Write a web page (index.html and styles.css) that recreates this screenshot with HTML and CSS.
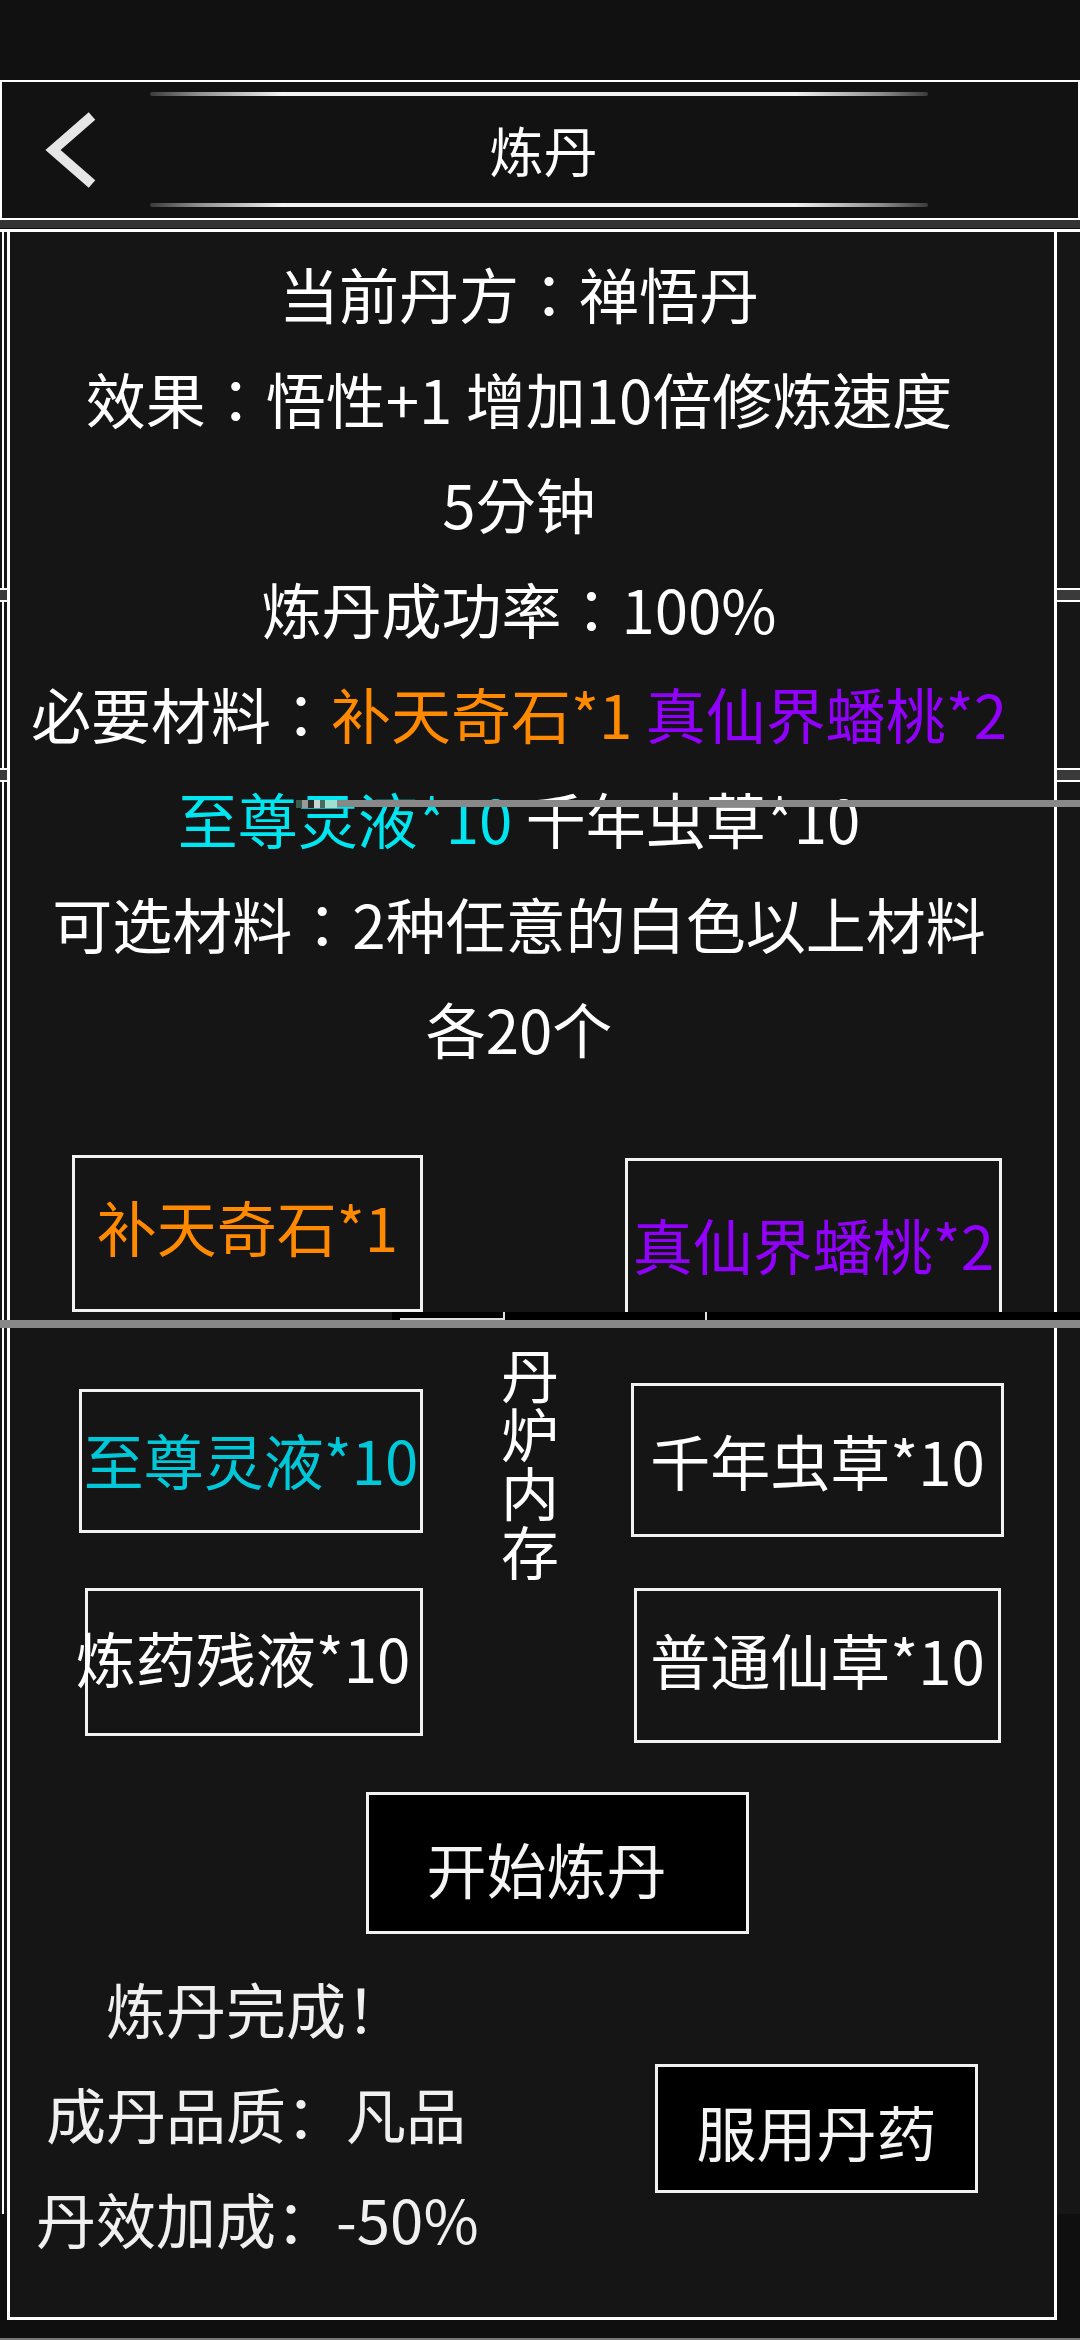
FILE: index.html
```html
<!DOCTYPE html>
<html lang="zh-CN">
<head>
<meta charset="utf-8">
<title>炼丹</title>
<link rel="stylesheet" href="styles.css">
</head>
<body>
<div class="screen">
  <div class="statusbar"></div>
  <header class="topbar">
    <div class="back">
      <svg width="148" height="115" viewBox="0 0 148 115">
        <polyline points="90,24 51,58 90,92" fill="none" stroke="#e6e6e6" stroke-width="10" stroke-linecap="butt" stroke-linejoin="miter"/>
      </svg>
    </div>
    <span class="deco deco-top"></span>
    <h1 class="title">炼丹</h1>
    <span class="deco deco-bottom"></span>
  </header>
  <main class="stage">
    <div class="backdrop">
      <span class="band band-1"></span>
      <span class="band band-2"></span>
    </div>
    <section class="panel">
      <div class="recipe" lang="zh-TW">
        <p>当前丹方：禅悟丹</p>
        <p>效果：悟性+1 增加10倍修炼速度</p>
        <p>5分钟</p>
        <p>炼丹成功率：100%</p>
        <p>必要材料：<span class="orange">补天奇石*1</span> <span class="purple">真仙界蟠桃*2</span></p>
        <p><span class="cyan">至尊灵液*10</span> 千年虫草*10</p>
        <p>可选材料：2种任意的白色以上材料</p>
        <p>各20个</p>
      </div>
      <div class="slots">
        <div class="slot slot-a orange">补天奇石*1</div>
        <div class="slot slot-b purple">真仙界蟠桃*2</div>
        <div class="furnace-label">丹炉内存</div>
        <div class="slot slot-c cyan-dim">至尊灵液*10</div>
        <div class="slot slot-d">千年虫草*10</div>
        <div class="slot slot-e">炼药残液*10</div>
        <div class="slot slot-f">普通仙草*10</div>
      </div>
      <button class="btn btn-start">开始炼丹</button>
      <div class="result">
        <div class="result-text">
          <p class="line r1">炼丹完成！</p>
          <p class="line r2">成丹品质：凡品</p>
          <p class="line r3">丹效加成：-50%</p>
        </div>
        <button class="btn btn-take">服用丹药</button>
      </div>
    </section>
    <div class="scanline scan-1"></div>
    <div class="glitch-bits"></div>
    <div class="tear"><span class="tick tick-1"></span><span class="tick tick-2"></span></div>
    <div class="scanline scan-2"></div>
  </main>
  <div class="bottom-edge"></div>
</div>
</body>
</html>
```
FILE: styles.css
```css
html, body {
  margin: 0;
  padding: 0;
  background: #111111;
}

.screen {
  width: 1080px;
  height: 2340px;
  overflow: hidden;
  background: #0f0f0f;
  color: #ffffff;
  font-family: "Noto Sans CJK SC", "Noto Sans", sans-serif;
}

.statusbar {
  height: 80px;
  background: #111111;
}

/* header */
.topbar {
  box-sizing: border-box;
  height: 140px;
  border: 2px solid #ffffff;
  background: #121212;
  display: grid;
  grid-template-columns: 148px 778px 1fr;
  grid-template-rows: 4px 1fr 4px;
  padding: 10px 0 11px;
}

.back {
  grid-column: 1;
  grid-row: 1 / 4;
}

.back svg {
  display: block;
}

.deco {
  grid-column: 2;
  height: 4px;
  border-radius: 2px;
  background: linear-gradient(90deg, #3a3a3a 0%, #8c8c8c 6%, #f2f2f2 17%, #f2f2f2 83%, #8c8c8c 94%, #3a3a3a 100%);
}

.deco-top { grid-row: 1; }
.deco-bottom { grid-row: 3; }

.title {
  grid-column: 2;
  grid-row: 2;
  align-self: center;
  margin: 0;
  padding-left: 9px;
  text-align: center;
  font-size: 54px;
  font-weight: 400;
  line-height: 1;
  color: #ffffff;
}

/* stage */
.stage {
  position: relative;
  box-sizing: border-box;
  height: 2118px;
  border-top: 8px solid #333333;
  padding-top: 1px;
  background: #0f0f0f;
}

.backdrop {
  position: absolute;
  top: 1px;
  left: 0;
  right: 0;
  height: 1982px;
  background: #161616;
  border-top: 3px solid #ffffff;
}

.backdrop::before {
  content: "";
  position: absolute;
  left: 2px;
  top: 0;
  bottom: 0;
  width: 2px;
  background: #ffffff;
}

.band {
  position: absolute;
  left: 0;
  right: 0;
  height: 10px;
  background: #3a3a3a;
  border-top: 2px solid #ffffff;
  border-bottom: 2px solid #ffffff;
}

.band-1 { top: 356px; }
.band-2 { top: 536px; }

.panel {
  position: relative;
  box-sizing: border-box;
  margin-left: 7px;
  width: 1050px;
  height: 2091px;
  border: 3px solid #ffffff;
  background: #151515;
}

/* recipe text */
.recipe {
  font-family: "Noto Sans CJK TC", "Noto Sans CJK SC", sans-serif;
  font-size: 60px;
  line-height: 105px;
  text-align: center;
  padding: 8px 26px 0 0;
}

.recipe p {
  margin: 0;
  white-space: nowrap;
}

.orange { color: #ff8a00; }
.purple { color: #9100fa; }
.cyan { color: #00e6f0; }
.cyan-dim { color: #00c8d8; }

/* material slots */
.slots {
  display: grid;
  grid-template-columns: 351px 202px 381px;
  grid-template-rows: 228px 205px 155px;
  margin: 75px 0 0 62px;
  font-size: 60px;
}

.slot {
  box-sizing: border-box;
  border: 3px solid #f2f2f2;
  display: flex;
  align-items: center;
  justify-content: center;
  white-space: nowrap;
  line-height: 1.2;
  align-self: start;
}

.slot-a {
  grid-column: 1;
  grid-row: 1;
  justify-self: end;
  width: 351px;
  height: 157px;
  padding-bottom: 16px;
}

.slot-b {
  grid-column: 3;
  grid-row: 1;
  justify-self: start;
  width: 377px;
  height: 167px;
  margin-top: 3px;
  padding-top: 5px;
}

.slot-c {
  grid-column: 1;
  grid-row: 2;
  justify-self: end;
  width: 344px;
  height: 144px;
  margin-top: 6px;
  padding-bottom: 4px;
}

.slot-d {
  grid-column: 3;
  grid-row: 2;
  justify-self: start;
  width: 373px;
  height: 154px;
  margin-left: 6px;
}

.slot-e {
  grid-column: 1;
  grid-row: 3;
  justify-self: end;
  width: 338px;
  height: 148px;
  padding: 0 22px 10px 0;
}

.slot-f {
  grid-column: 3;
  grid-row: 3;
  justify-self: start;
  width: 367px;
  height: 155px;
  margin-left: 9px;
  padding-bottom: 13px;
}

.furnace-label {
  grid-column: 2;
  grid-row: 2;
  align-self: start;
  justify-self: start;
  margin: -36px 0 0 78px;
  writing-mode: vertical-rl;
  text-orientation: upright;
  font-size: 58px;
  line-height: 58px;
  letter-spacing: 1px;
}

/* buttons */
.btn {
  box-sizing: border-box;
  display: flex;
  align-items: center;
  justify-content: center;
  background: #000000;
  color: #f4f4f4;
  border: 3px solid #f2f2f2;
  font-family: "Noto Sans CJK SC", sans-serif;
  font-size: 60px;
  line-height: 1.2;
  padding: 0;
  white-space: nowrap;
}

.btn-start {
  width: 383px;
  height: 142px;
  margin: 49px 0 0 356px;
  padding: 10px 22px 0 0;
}

/* result */
.result {
  display: flex;
  margin-top: 21px;
}

.result-text {
  width: 645px;
  font-size: 60px;
  line-height: 105px;
  color: #f0f0f0;
}

.line {
  margin-top: 0;
  margin-bottom: 0;
  white-space: nowrap;
}

.r1 { margin-left: 96px; }
.r2 { margin-left: 36px; }
.r3 { margin-left: 26px; }

.btn-take {
  width: 323px;
  height: 129px;
  margin-top: 109px;
  padding-top: 4px;
}

/* rendering glitches lying over the panel */
.scanline {
  position: absolute;
  background: #888888;
}

.scan-1 {
  top: 572px;
  left: 337px;
  right: 0;
  height: 7px;
}

.glitch-bits {
  position: absolute;
  top: 572px;
  left: 296px;
  width: 41px;
  height: 8px;
  background: linear-gradient(90deg, #3a5a4a 0 6px, #9a9a9a 6px 12px, #2c2c2c 12px 18px, #c8d8d0 18px 24px, #4a6a60 24px 29px, #9fe0d0 29px 41px);
}

.tear {
  position: absolute;
  top: 1084px;
  left: 392px;
  right: 0;
  height: 8px;
  background: #000000;
}

.tear::before {
  content: "";
  position: absolute;
  left: 8px;
  bottom: 0;
  width: 103px;
  height: 2px;
  background: #dddddd;
}

.tick {
  position: absolute;
  top: 0;
  width: 2px;
  height: 8px;
  background: #e0e0e0;
}

.tick-1 { left: 111px; }
.tick-2 { left: 313px; }

.scan-2 {
  top: 1092px;
  left: 0;
  right: 0;
  height: 8px;
}

.bottom-edge {
  height: 2px;
  background: #777777;
}
```
